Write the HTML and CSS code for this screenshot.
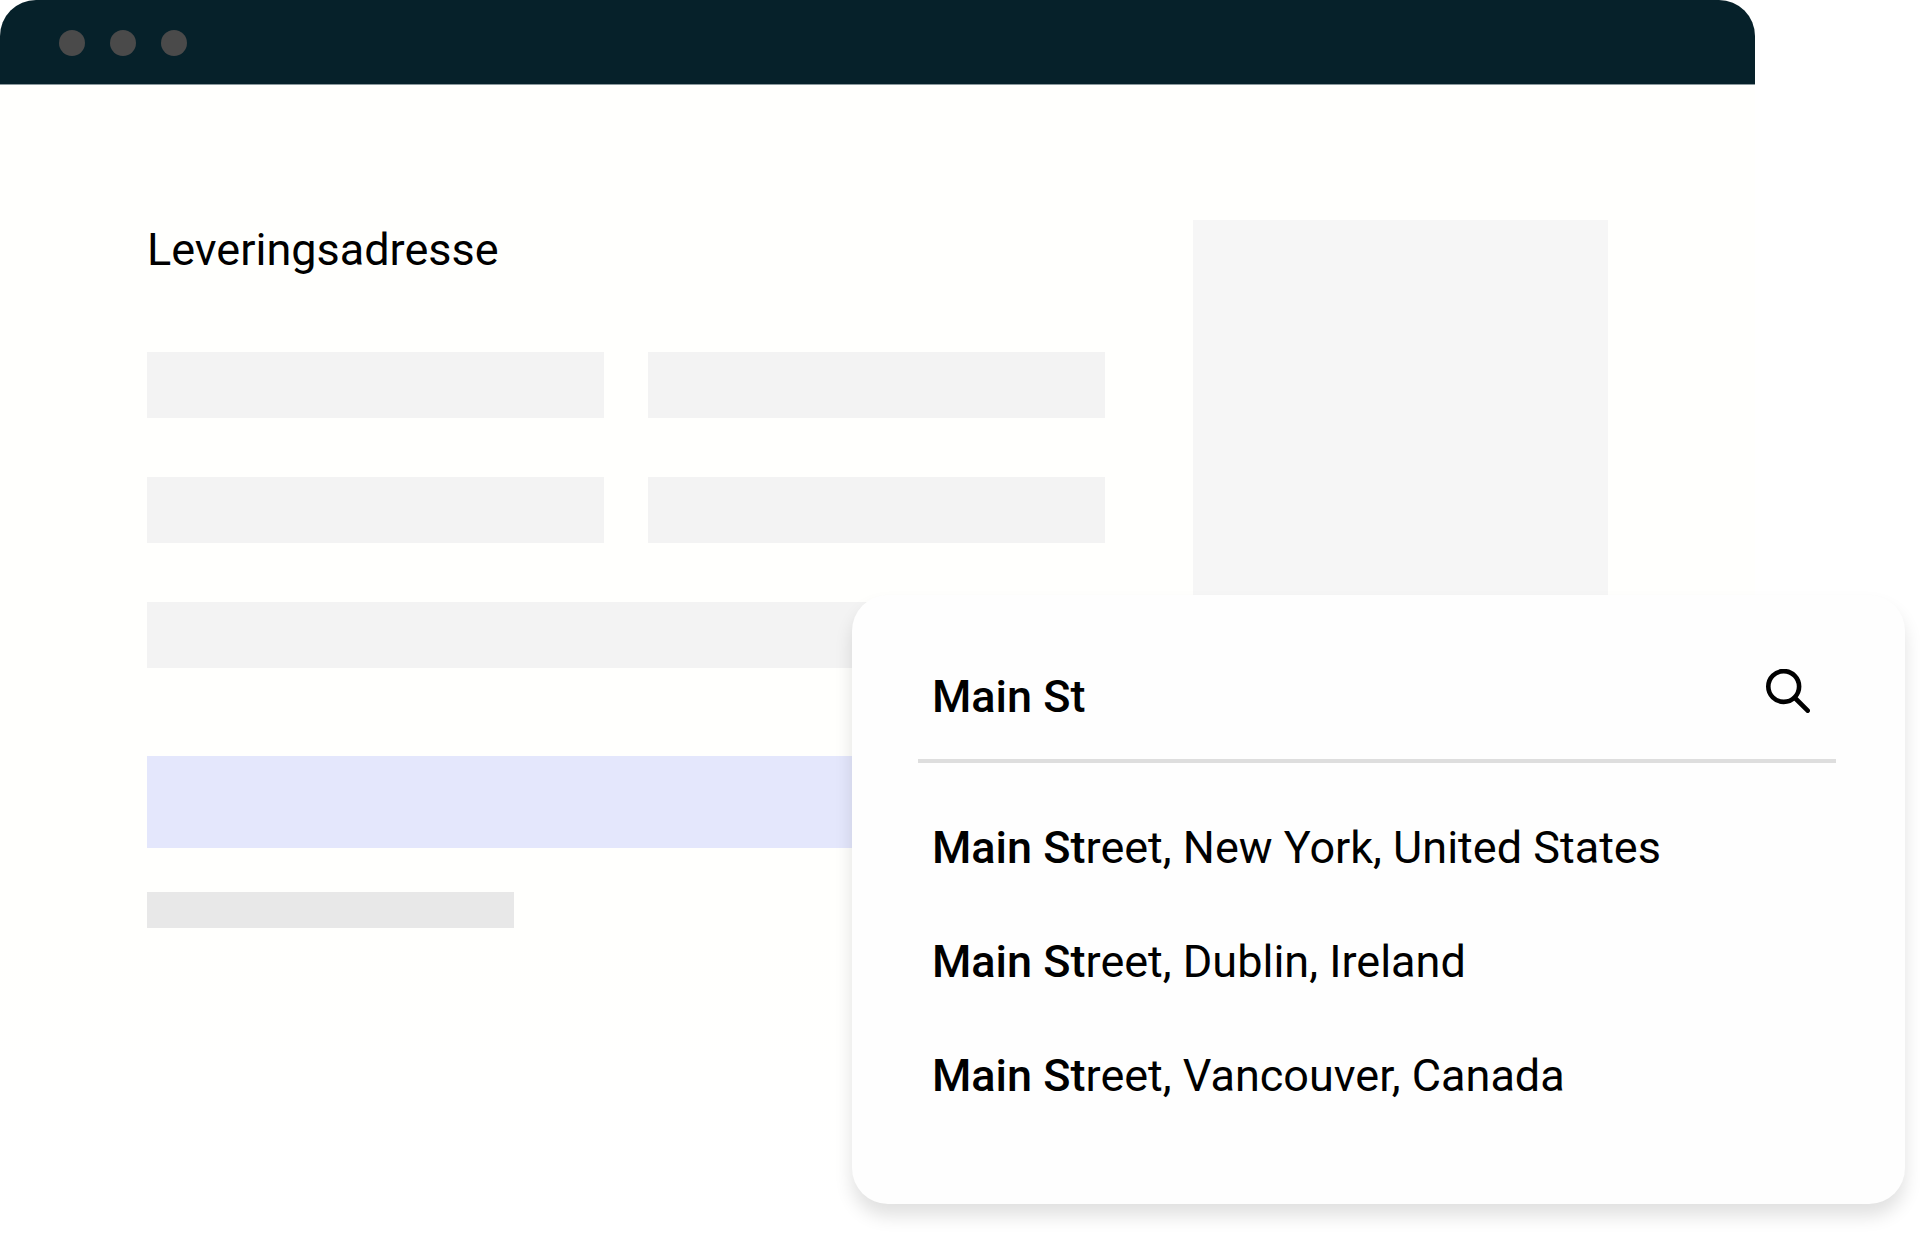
FILE: index.html
```html
<!DOCTYPE html>
<html lang="da">
<head>
  <meta charset="utf-8">
  <meta name="viewport" content="width=device-width, initial-scale=1">
  <title>Leveringsadresse</title>
  <link rel="stylesheet" href="styles.css">
</head>
<body>
  <div class="window">
    <header class="titlebar">
      <span class="dot"></span>
      <span class="dot"></span>
      <span class="dot"></span>
    </header>

    <main class="content">
      <form class="form">
        <h1 class="heading">Leveringsadresse</h1>
        <div class="fields">
          <input class="field" type="text" aria-label="Fornavn">
          <input class="field" type="text" aria-label="Efternavn">
          <input class="field" type="text" aria-label="E-mail">
          <input class="field" type="text" aria-label="Telefon">
          <input class="field field-wide" type="text" aria-label="Firma">
        </div>
        <input class="field address" type="text" aria-label="Adresse">
        <div class="note"></div>
      </form>
      <aside class="summary"></aside>
    </main>

    <section class="lookup">
      <div class="search">
        <input class="search-input" type="text" value="Main St" aria-label="Adresse">
        <button class="search-button" type="button" aria-label="Søg">
          <svg class="search-icon" viewBox="0 0 44 44" fill="none" stroke="currentColor" stroke-width="4.6" stroke-linecap="round">
            <circle cx="17.7" cy="17.5" r="15.4"/>
            <path d="M29 29L41.7 41.7"/>
          </svg>
        </button>
      </div>
      <ul class="results">
        <li><button class="result" type="button"><b class="match">Main St</b>reet, New York, United States</button></li>
        <li><button class="result" type="button"><b class="match">Main St</b>reet, Dublin, Ireland</button></li>
        <li><button class="result" type="button"><b class="match">Main St</b>reet, Vancouver, Canada</button></li>
      </ul>
    </section>
  </div>
</body>
</html>
```

FILE: styles.css
```css
* {
  box-sizing: border-box;
}

body {
  margin: 0;
  background: #fff;
  color: #000;
  font: 400 45px/56px Roboto, "Liberation Sans", sans-serif;
}

input,
button {
  border: 0;
  padding: 0;
  border-radius: 0;
  background: none;
  color: inherit;
  font: inherit;
  outline: 0;
}

button {
  cursor: pointer;
}

.window {
  position: relative;
  margin-right: 165px;
  min-height: 100vh;
  background: linear-gradient(#fffffd 75%, #fff);
  border-radius: 36px 36px 0 0;
}

.titlebar {
  display: flex;
  gap: 25px;
  height: 85px;
  padding: 30px 59px 0;
  background: #06212a;
  border-bottom: 1px solid #8b999d;
  border-radius: 36px 36px 0 0;
}

.dot {
  width: 26px;
  height: 26px;
  border-radius: 50%;
  background: #4a4a4a;
}

.content {
  display: grid;
  grid-template-columns: 958fr 415fr;
  column-gap: 88px;
  align-items: start;
  padding: 135px 147px 0;
}

.heading {
  margin: 0 0 74px;
  padding-top: 2px;
  font: inherit;
}

.fields {
  display: grid;
  grid-template-columns: 1fr 1fr;
  gap: 59px 44px;
  margin-bottom: 88px;
}

.field {
  display: block;
  width: 100%;
  height: 66px;
  padding: 0 12px;
  background: #f3f3f3;
}

.field-wide {
  grid-column: 1 / -1;
}

.address {
  height: 92px;
  background: #e4e7fc;
}

.note {
  width: 367px;
  height: 36px;
  margin-top: 44px;
  background: #e8e8e8;
}

.summary {
  height: 400px;
  background: #f6f6f6;
}

/* Address suggestions float over the form and past the window's right edge. */
.lookup {
  position: absolute;
  top: 595px;
  right: -150px;
  width: 60%;
  padding: 74px 69px 100px 66px;
  background: #fefefe;
  border-radius: 36px;
  box-shadow: 0 12px 18px rgba(0, 0, 0, 0.12);
}

.search {
  display: flex;
  align-items: flex-start;
  padding: 0 26px 34px 14px;
  border-bottom: 4px solid #dedede;
}

.search-input {
  flex: 1;
  min-width: 0;
  height: 56px;
  font-weight: 500;
}

.search-button,
.search-icon {
  display: block;
  width: 44px;
  height: 44px;
}

.results {
  display: grid;
  gap: 58px;
  margin: 57px 0 0;
  padding: 0 14px;
  list-style: none;
}

.result {
  display: block;
  width: 100%;
  text-align: left;
}

.match {
  font-weight: 500;
}
```
